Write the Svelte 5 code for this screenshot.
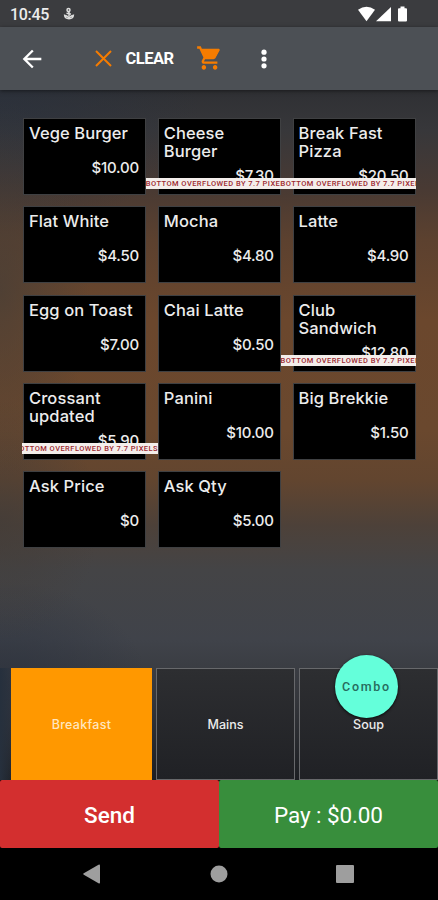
<script lang="ts">
	type Item = { name: string; price: string; overflow?: 'left' | 'right' };

	const items: Item[] = [
		{ name: 'Vege Burger', price: '$10.00' },
		{ name: 'Cheese Burger', price: '$7.30', overflow: 'left' },
		{ name: 'Break Fast Pizza', price: '$20.50', overflow: 'left' },
		{ name: 'Flat White', price: '$4.50' },
		{ name: 'Mocha', price: '$4.80' },
		{ name: 'Latte', price: '$4.90' },
		{ name: 'Egg on Toast', price: '$7.00' },
		{ name: 'Chai Latte', price: '$0.50' },
		{ name: 'Club Sandwich', price: '$12.80', overflow: 'left' },
		{ name: 'Crossant updated', price: '$5.90', overflow: 'right' },
		{ name: 'Panini', price: '$10.00' },
		{ name: 'Big Brekkie', price: '$1.50' },
		{ name: 'Ask Price', price: '$0' },
		{ name: 'Ask Qty', price: '$5.00' }
	];

	const categories = ['Breakfast', 'Mains', 'Soup'];
	let selected = $state('Breakfast');
</script>

<div class="screen">
	<div class="status">
		<span class="time">10:45</span>
		<svg class="debug" width="12" height="14" viewBox="0 0 12 14" fill="none" stroke="#dedede" stroke-width="1.5">
			<circle cx="5.5" cy="3" r="1.5" />
			<path d="M6 4.500v4.500M3.500 6.200l4.500.8M1.500 7.500c.2 3 2 4.200 4.500 4.200s4.300-1.200 4.500-4.200M2.500 8.500L6 10.500l3.500-2" />
		</svg>
		<svg class="signals" width="52" height="18" viewBox="0 0 52 18" fill="#fff">
			<path d="M1 3.800Q9.500 -2.200 18 3.800L9.500 15.200Z" />
			<path d="M34 1v14.300H19Z" />
			<path d="M43.500 .500h4v1.700h1.500q1 0 1 1V14.500q0 1-1 1h-7q-1 0-1-1V3.200q0-1 1-1h1.500Z" />
		</svg>
	</div>

	<header class="appbar">
		<button class="back" aria-label="Back">
			<svg width="28" height="28" viewBox="0 0 24 24" fill="#fff">
				<path d="M20 11H7.830l5.590-5.590L12 4l-8 8 8 8 1.410-1.410L7.830 13H20v-2z" />
			</svg>
		</button>
		<button class="clear">
			<svg width="17" height="17" viewBox="0 0 17 17" fill="none" stroke="#f57c00" stroke-width="2">
				<path d="M1 1l15 15M16 1L1 16" />
			</svg>
			<span>CLEAR</span>
		</button>
		<button class="cart" aria-label="Cart">
			<svg width="27" height="28" viewBox="0 0 24 24" preserveAspectRatio="none" fill="#f57c00">
				<path d="M7 18c-1.100 0-1.990.9-1.990 2S5.900 22 7 22s2-.9 2-2-.9-2-2-2zM1 2v2h2l3.600 7.590-1.350 2.450c-.16.28-.25.61-.25.960 0 1.100.9 2 2 2h12v-2H7.420c-.14 0-.25-.11-.25-.25l.03-.12.900-1.630h7.450c.75 0 1.410-.41 1.750-1.030l3.580-6.490c.08-.14.120-.31.120-.48 0-.55-.45-1-1-1H5.210l-.94-2H1zm16 16c-1.100 0-1.990.9-1.990 2s.89 2 1.990 2 2-.9 2-2-.9-2-2-2z" />
				<path d="M5 5h16l-4.200 7H8z" />
			</svg>
		</button>
		<button class="more" aria-label="More">
			<svg width="6" height="20" viewBox="0 0 6 20" fill="#fff">
				<circle cx="3" cy="3.200" r="2.600" />
				<circle cx="3" cy="10" r="2.600" />
				<circle cx="3" cy="16.800" r="2.600" />
			</svg>
		</button>
	</header>

	<main>
		<div class="grid">
			{#each items as item}
				<div class="card">
					<div class="content">
						<div class="name">{item.name}</div>
						<div class="price">{item.price}</div>
					</div>
					{#if item.overflow}
						<div class="overflow {item.overflow}"><span>BOTTOM OVERFLOWED BY 7.7 PIXELS</span></div>
					{/if}
				</div>
			{/each}
		</div>
	</main>

	<nav class="tabs">
		{#each categories as category}
			<button class="tab" class:selected={selected === category} onclick={() => (selected = category)}>
				{category}
			</button>
		{/each}
		<button class="combo">Combo</button>
	</nav>

	<div class="actions">
		<button class="send">Send</button>
		<button class="pay">Pay : $0.00</button>
	</div>

	<div class="navbar">
		<svg width="18" height="20" viewBox="0 0 18 20" fill="#9e9e9e">
			<path d="M.8 9.300L15.500.8q1.500-.8 1.500.8v16.800q0 1.600-1.500.8L.8 10.700q-1.200-.7 0-1.400Z" />
		</svg>
		<svg width="18" height="18" viewBox="0 0 18 18" fill="#9e9e9e">
			<circle cx="9" cy="9" r="8.500" />
		</svg>
		<svg width="18" height="18" viewBox="0 0 18 18" fill="#9e9e9e">
			<rect width="18" height="18" rx="1" />
		</svg>
	</div>
</div>

<style>
	:global(body) {
		margin: 0;
		background: #000;
	}

	button {
		border: 0;
		padding: 0;
		margin: 0;
		background: none;
		color: inherit;
		font: inherit;
	}

	svg {
		display: block;
	}

	.screen {
		display: flex;
		flex-direction: column;
		width: 438px;
		height: 900px;
		overflow: hidden;
		color: #ececec;
		font-family: Roboto, sans-serif;
		background:
			radial-gradient(ellipse 90px 190px at 0 290px, rgba(70, 62, 55, 0.7), transparent),
			radial-gradient(ellipse 100px 120px at 0 520px, rgba(66, 60, 56, 0.7), transparent),
			radial-gradient(ellipse 150px 110px at 0 690px, rgba(44, 50, 62, 0.8), transparent),
			radial-gradient(ellipse 200px 120px at 0 110px, rgba(42, 49, 61, 0.7), transparent),
			linear-gradient(#2f3034 90px, #37373a 130px, #493a33 190px, #5c412f 240px, #6b472d 320px, #6a482e 430px, #62452f 480px, #4d4139 525px, #444446 570px, #40434a 640px, #34363b 700px, #1c1e22 780px);
	}

	.status {
		display: flex;
		align-items: center;
		height: 27px;
		flex: none;
		padding: 0 29px 0 10px;
		background: #3b3c3f;
	}

	.time {
		font-size: 16px;
		font-weight: 500;
		letter-spacing: -0.3px;
		margin-top: 2px;
		width: 53px;
	}

	.debug {
		margin-top: 1px;
	}

	.signals {
		margin: 3px 0 0 auto;
	}

	.appbar {
		display: flex;
		align-items: center;
		height: 63px;
		flex: none;
		padding-left: 18px;
		background: #4c5055;
		box-shadow: 0 1px 4px rgba(0, 0, 0, 0.5);
	}

	.clear {
		display: flex;
		align-items: center;
		gap: 13px;
		margin-left: 49px;
		color: #fff;
		font-size: 16.5px;
		font-weight: 700;
		letter-spacing: -0.5px;
	}

	.clear span {
		width: 49px;
		white-space: nowrap;
	}

	.cart {
		margin: -1px 0 0 22px;
	}

	.more {
		margin-left: 37.5px;
	}

	main {
		flex: 1;
		padding: 28px 22px 0 23px;
	}

	.grid {
		display: grid;
		grid-template-columns: repeat(3, 123px);
		grid-auto-rows: 77px;
		gap: 11.3px 11.8px;
	}

	.card {
		position: relative;
		box-sizing: border-box;
		border: 1px solid #3f4042;
		background: #000;
		font-family: Inter, sans-serif;
	}

	.content {
		box-sizing: border-box;
		height: 60px;
		overflow: hidden;
		padding: 5px 5px 0;
	}

	.name {
		font-size: 16.5px;
		font-weight: 500;
		line-height: 18px;
		letter-spacing: 0.1px;
	}

	.price {
		margin-top: 16px;
		padding-right: 1px;
		font-size: 15px;
		font-weight: 500;
		line-height: 20px;
		letter-spacing: -0.2px;
		text-align: right;
	}

	.card:has(.overflow) .price {
		margin-top: 6px;
	}

	.overflow {
		position: absolute;
		top: 59px;
		left: -13px;
		width: 135px;
		height: 11px;
		display: flex;
		overflow: hidden;
		background: #f3eeeb;
		color: #9c2930;
		font-family: Roboto, sans-serif;
		font-size: 7.500px;
		font-weight: 500;
		line-height: 11px;
		letter-spacing: 0.450px;
		white-space: nowrap;
	}

	.overflow.right {
		left: -2px;
		width: 136px;
		justify-content: flex-end;
	}

	.tabs {
		position: relative;
		display: flex;
		gap: 4px;
		height: 112px;
		flex: none;
		padding-left: 11px;
		background: linear-gradient(90deg, #26303d, transparent 14px);
	}

	.tab {
		box-sizing: border-box;
		width: 139px;
		flex: none;
		border: 1px solid #67686b;
		background: linear-gradient(#2d2e31, #202125);
		font-family: Inter, sans-serif;
		font-size: 12.500px;
		font-weight: 500;
		padding-top: 1px;
	}

	.tab.selected {
		width: 141px;
		border-color: #ff9800;
		background: #ff9800;
		color: #ffe6bf;
		letter-spacing: 0.3px;
	}

	.combo {
		position: absolute;
		top: -13px;
		left: 335px;
		width: 63px;
		height: 63px;
		border-radius: 50%;
		background: #64ffda;
		color: #276b5d;
		font-size: 12.500px;
		font-weight: 500;
		letter-spacing: 1.700px;
		box-shadow: 0 1px 3px rgba(0, 0, 0, 0.8);
	}

	.actions {
		display: flex;
		height: 67.500px;
		flex: none;
		background: #000;
		font-size: 22.500px;
	}

	.actions button {
		flex: 1;
		padding-top: 2px;
		border-radius: 2px;
		color: #fff;
	}

	.send {
		background: #d32f2f;
		font-weight: 500;
	}

	.pay {
		background: #388e3c;
		letter-spacing: -0.1px;
	}

	.navbar {
		display: flex;
		align-items: center;
		justify-content: space-between;
		height: 52.500px;
		flex: none;
		box-sizing: border-box;
		padding: 0 84px 0 83px;
		background: #000;
	}
</style>
